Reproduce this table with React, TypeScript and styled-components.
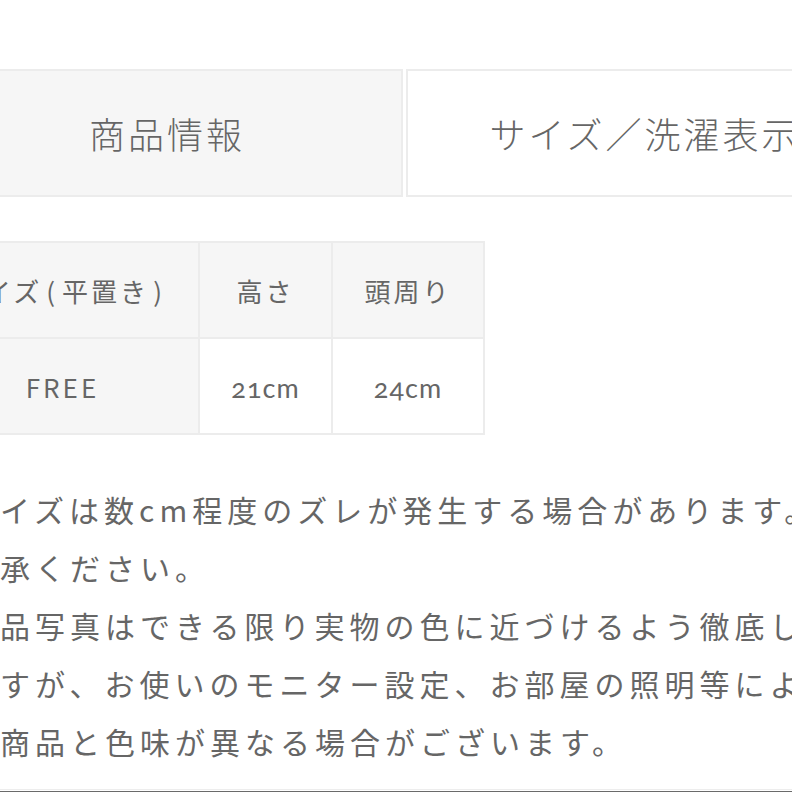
import styled, { createGlobalStyle } from 'styled-components';

const GlobalStyle = createGlobalStyle`
  html, body {
    margin: 0;
    padding: 0;
    background: #ffffff;
    overflow: hidden;
  }
  body {
    font-family: "Noto Sans CJK JP", "Noto Sans", sans-serif;
    color: #676767;
  }
`;

const Page = styled.div`
  width: 960px;
  margin-left: -72px;
  padding-top: 69px;
`;

const Tabs = styled.div`
  display: grid;
  grid-template-columns: 475px 475px;
  gap: 3px;
`;

const Tab = styled.div<{ active?: boolean }>`
  box-sizing: border-box;
  height: 128px;
  display: flex;
  align-items: center;
  justify-content: center;
  border: 2px solid #ececec;
  background: ${(props) => (props.active ? '#f6f6f6' : '#ffffff')};
  font-size: 36px;
  letter-spacing: 3px;
  font-weight: 300;
  color: #666666;
  padding-left: 3px;
`;

const SizeTable = styled.table`
  margin-top: 44px;
  margin-left: -3px;
  border-collapse: collapse;
  table-layout: fixed;
`;

const Cell = styled.td<{ head?: boolean; w?: number }>`
  box-sizing: border-box;
  width: ${(props) => (props.w ? props.w + 'px' : 'auto')};
  height: ${(props) => (props.head ? '96px' : '94px')};
  padding: 0;
  border: 2px solid #ececec;
  background: ${(props) => (props.head ? '#f6f6f6' : '#ffffff')};
  text-align: center;
  white-space: nowrap;
  font-size: 26px;
  letter-spacing: 3px;
  font-weight: 400;
  color: #666666;
`;

// half-width bracket with a bit of air, as in the original header
const Paren = styled.span`
  display: inline-block;
  margin: 0 4px;
`;

const Num = styled.span`
  font-family: "Lato", "Noto Sans", sans-serif;
  font-variant-numeric: oldstyle-nums;
  font-feature-settings: "onum" 1;
  font-size: 27px;
  letter-spacing: 1px;
`;

const Notes = styled.div`
  margin-top: 45px;
  padding-left: 2px;
`;

const NoteLine = styled.div`
  white-space: nowrap;
  font-size: 30px;
  letter-spacing: 5px;
  line-height: 58px;
  font-weight: 400;
  color: #666666;
`;

const Footer = styled.div`
  margin-top: 19px;
  margin-left: 72px;
  width: 792px;
  height: 1px;
  border-top: 1px solid #ededed;
  border-bottom: 2px solid #6a6a6a;
`;

const notes = [
  '※サイズは数cm程度のズレが発生する場合があります。予め',
  'ご了承ください。',
  '※商品写真はできる限り実物の色に近づけるよう徹底してお',
  'りますが、お使いのモニター設定、お部屋の照明等により実',
  '際の商品と色味が異なる場合がございます。',
];

export default function App() {
  return (
    <>
      <GlobalStyle />
      <Page>
        <Tabs>
          <Tab active>商品情報</Tab>
          <Tab>サイズ／洗濯表示</Tab>
        </Tabs>
        <SizeTable>
          <tbody>
            <tr>
              <Cell head w={273}>
                サイズ<Paren>(</Paren>平置き<Paren>)</Paren>
              </Cell>
              <Cell head w={133}>高さ</Cell>
              <Cell head w={152}>頭周り</Cell>
            </tr>
            <tr>
              <Cell head>FREE</Cell>
              <Cell>
                <Num>21cm</Num>
              </Cell>
              <Cell>
                <Num>24cm</Num>
              </Cell>
            </tr>
          </tbody>
        </SizeTable>
        <Notes>
          {notes.map((line) => (
            <NoteLine key={line}>{line}</NoteLine>
          ))}
        </Notes>
        <Footer />
      </Page>
    </>
  );
}
